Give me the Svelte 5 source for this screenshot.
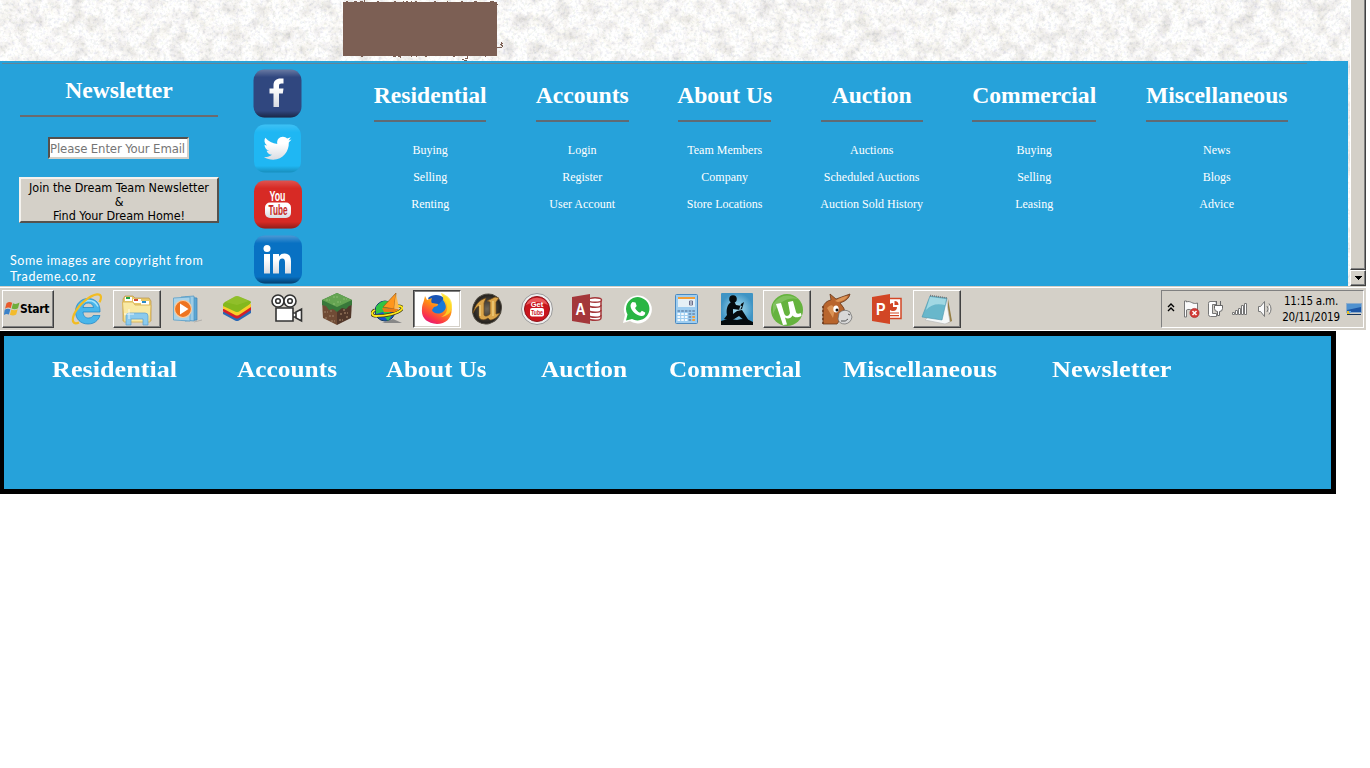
<script>
  const columns = [
    { title: 'Residential', links: ['Buying', 'Selling', 'Renting'] },
    { title: 'Accounts', links: ['Login', 'Register', 'User Account'] },
    { title: 'About Us', links: ['Team Members', 'Company', 'Store Locations'] },
    { title: 'Auction', links: ['Auctions', 'Scheduled Auctions', 'Auction Sold History'] },
    { title: 'Commercial', links: ['Buying', 'Selling', 'Leasing'] },
    { title: 'Miscellaneous', links: ['News', 'Blogs', 'Advice'] }
  ];

  // cell: width of the slot, stretch: horizontal widening of the letters
  const draft = [
    { title: 'Residential', cell: 185, stretch: 1.163 },
    { title: 'Accounts', cell: 149, stretch: 1.127 },
    { title: 'About Us', cell: 155, stretch: 1.108 },
    { title: 'Auction', cell: 128, stretch: 1.128 },
    { title: 'Commercial', cell: 174, stretch: 1.118 },
    { title: 'Miscellaneous', cell: 209, stretch: 1.141 },
    { title: 'Newsletter', cell: 150, stretch: 1.166 }
  ];

  const tasks = [
    'ie', 'explorer', 'media', 'bluestacks', 'camera', 'minecraft', 'boat', 'firefox', 'unreal',
    'gettube', 'access', 'whatsapp', 'calc', 'kindle', 'utorrent', 'emule', 'powerpoint', 'notepad'
  ];
  const raised = ['explorer', 'utorrent', 'notepad'];
  const dots = [0, 1, 2, 3, 4];
</script>

<div class="page">
  <div class="view">
    <svg class="stone" width="1350" height="286" aria-hidden="true">
      <filter id="grain" x="0" y="0" width="100%" height="100%" color-interpolation-filters="sRGB">
        <feTurbulence type="fractalNoise" baseFrequency="0.07" numOctaves="5" seed="21" result="n" />
        <feColorMatrix in="n" type="matrix" values=".24 .08 0 0 .825  .25 .08 0 0 .815  .26 .08 .03 0 .79  0 0 0 0 1" result="broad" />
        <feTurbulence type="fractalNoise" baseFrequency="0.33" numOctaves="3" seed="5" result="f" />
        <feColorMatrix in="f" type="matrix" values=".24 0 0 0 .87  .21 .03 0 0 .87  .18 0 .07 0 .863  0 0 0 0 1" result="fine" />
        <feBlend in="broad" in2="fine" mode="multiply" />
      </filter>
      <rect width="1350" height="286" fill="#f4f3f0" filter="url(#grain)" />
    </svg>
    <div class="main">
      <div class="hero">
        <svg width="162" height="61" viewBox="0 0 162 61" shape-rendering="crispEdges">
          <rect y="2" width="154" height="54" fill="#7c5f54" />
          <path d="M3 1h2v1h-2zM11 1h3v1h-3zM17 1h3v1h-3zM21 0h1v2h-1zM34 1h2v1h-2zM51 1h2v1h-2zM60 1h1v1h-1zM63 1h2v1h-2zM68 1h1v1h-1zM72 1h2v1h-2zM91 1h2v1h-2zM104 1h1v1h-1zM118 1h2v1h-2zM131 1h3v1h-3zM147 1h4v1h-4zM154 4h1v1h-1zM18 56h2v1h-2zM50 56h3v1h-3zM55 56h3v1h-3zM57 57h1v1h-1zM68 56h1v1h-1zM73 56h1v1h-1zM82 56h2v1h-2zM110 56h2v1h-2zM124 56h1v3h-1zM122 58h2v1h-2zM121 60h3v1h-3zM119 59h2v1h-2zM142 56h1v1h-1zM154 47h3v1h-3zM158 42h1v4h-1zM157 44h1v1h-1zM159 43h1v1h-1zM159 45h1v2h-1zM157 47h2v1h-2z" fill="#7c5f54" />
        </svg>
      </div>
      <footer class="footer">
        <div class="rule"></div>
        <div class="content">
          <section class="newsletter">
            <h2>Newsletter</h2>
            <input placeholder="Please Enter Your Email" />
            <button><span>Join the Dream Team Newsletter</span><br />&amp;<br /><span>Find Your Dream Home!</span></button>
            <p>Some images are copyright from<br />Trademe.co.nz</p>
          </section>
          <div class="social">
            <svg viewBox="0 0 49 49">
              <defs>
                <linearGradient id="sh" x2="0" y2="1"><stop offset="0" stop-color="#fff" stop-opacity=".28" /><stop offset=".16" stop-color="#fff" stop-opacity="0" /><stop offset=".86" stop-color="#000" stop-opacity="0" /><stop offset="1" stop-color="#000" stop-opacity=".45" /></linearGradient>
                <linearGradient id="wh" x2="0" y2="1"><stop offset=".3" stop-color="#fff" /><stop offset="1" stop-color="#d9dce2" /></linearGradient>
              </defs>
              <rect x=".5" y=".5" width="48" height="48" rx="11" fill="#30477f" /><rect x=".5" y=".5" width="48" height="48" rx="11" fill="url(#sh)" />
              <path d="M20.500 38V24.500h-4v-5h4v-3c0-5 3-7 7-7h3v5h-2c-2 0-2.500.8-2.500 2.500v2.500h4.500l-.7 5H26V38z" fill="url(#wh)" />
            </svg>
            <svg viewBox="0 0 49 49">
              <rect x="1" y=".5" width="47" height="48" rx="11" fill="#1fb7f3" /><rect x="1" y=".5" width="47" height="48" rx="11" fill="url(#sh)" opacity=".5" />
              <path d="M11 33c3 .2 5.500-.4 8-2.300-3 0-4.800-1.900-5.400-4h2.500c-2.900-.8-4.500-3-4.600-6 .8.500 1.600.7 2.500.8-2.700-2-3.200-5-1.700-7.700 3.300 3.800 7 5.800 12 6.100-.8-4.200 1.900-7.200 5.600-7.200 1.700 0 3.100.7 4.200 1.900l3.700-1.400-2.300 3.200 3-.8-2.700 2.900c.4 8.500-5.700 17.200-15.600 17.200-3.400 0-6.500-1-9.200-2.700z" fill="url(#wh)" />
            </svg>
            <svg viewBox="0 0 49 49">
              <rect x="1" y=".5" width="48" height="48" rx="11" fill="#d72a25" /><rect x="1" y=".5" width="48" height="48" rx="11" fill="url(#sh)" opacity=".7" />
              <text class="yt" x="24.500" y="21" textLength="16" lengthAdjust="spacingAndGlyphs" fill="#fff">You</text>
              <rect x="12" y="22.500" width="26" height="15.500" rx="5" fill="url(#wh)" />
              <text class="yt tube" x="25" y="35" textLength="19" lengthAdjust="spacingAndGlyphs" fill="#c52824">Tube</text>
            </svg>
            <svg viewBox="0 0 49 49">
              <rect x="1" y=".5" width="48" height="48" rx="11" fill="#0871c3" /><rect x="1" y=".5" width="48" height="48" rx="11" fill="url(#sh)" />
              <circle cx="14" cy="13.500" r="3.500" fill="#fff" />
              <path d="M11 19h6v19.500h-6zM20 19h6v2.500c1.200-2 3-3 5.500-3 4.800 0 6.500 3 6.500 8v12h-6v-11c0-2.600-.7-4-2.700-4S26 25 26 27.700v10.800h-6z" fill="url(#wh)" />
            </svg>
          </div>
          <nav class="columns">
            {#each columns as col}
              <div class="col">
                <h2>{col.title}</h2>
                <ul>
                  {#each col.links as link}<li>{link}</li>{/each}
                </ul>
              </div>
            {/each}
          </nav>
        </div>
      </footer>
    </div>
    <div class="scroll">
      <div class="thumb"></div>
      <div class="down"><svg width="7" height="4" shape-rendering="crispEdges"><path d="M0 0h7v1H6v1H5v1H4v1H3V3H2V2H1V1H0z" /></svg></div>
    </div>
  </div>

  <div class="taskbar">
    <div class="start">
      <svg width="16" height="16" viewBox="0 0 16 16">
        <path d="M2.500 2.300c2-1.700 3.800-1.500 5.700-.5L6.700 7.200C5 6.300 3.200 6.400 1 7.800z" fill="#e85a2c" />
        <path d="M9 2.300c2 1 4 .8 6.500-.7L14 7.200c-2.200 1.400-4.400 1.400-6.400.3z" fill="#6fae3c" />
        <path d="M.7 8.700c2.200-1.400 3.900-1.300 5.700-.4L4.900 13.600c-1.800-1-3.200-.9-5 .4z" fill="#3c82c8" />
        <path d="M7.300 8.500c2 1 4.200 1 6.400-.3l-1.500 5.300c-2.200 1.400-4.300 1.300-6.300.3z" fill="#f3bb2c" />
      </svg>
      <b>Start</b>
    </div>
    <div class="tasks">
      {#each tasks as t}
        <div class="task" class:raised={raised.includes(t)} class:active={t === 'firefox'}>
          <svg width="32" height="32" viewBox="0 0 32 32">
            {#if t === 'ie'}
              <path d="M29 19H12c.3 4 2.300 6 5.500 6 2.500 0 3.700-.8 4.700-2.500H29C27 28 23 31 17 31 9.500 31 4.500 26 4.500 18.500S10 5.500 17 5.500c7.500 0 12.500 5 12 13.500zM12 14.500h10.500c-.5-3-2.200-4.500-5.200-4.500s-4.700 1.700-5.300 4.500z" fill="#49b6ea" stroke="#1683c6" stroke-width=".7" />
              <path d="M7 16C9 11 12 8 18 7.500c4 0 7 2 9 6" fill="none" stroke="#a6e4fb" stroke-width="1.500" />
              <path d="M8 29.500C2 32 .5 28 3 21.500 7 12 19 2 26 1.300c5-.3 4.500 4 2.500 8" fill="none" stroke="#f2bc22" stroke-width="2.200" />
            {:else if t === 'explorer'}
              <path d="M2 5l2-3h8l2 2h14l2 3v20H2z" fill="#e8c868" stroke="#b8924a" stroke-width=".7" />
              <path d="M4 3h7v4H4z" fill="#fff" /><path d="M5 3h4v2H5z" fill="#25a343" />
              <path d="M12 5h8v4h-8z" fill="#fff" /><path d="M13 5h4v2h-4z" fill="#d54b32" />
              <path d="M20 7h8v4h-8z" fill="#fff" /><path d="M21 7h4v2h-4z" fill="#2a8cc8" />
              <path d="M1.500 8H12l2 3h16l-1 17H3z" fill="#f9e9a4" stroke="#dcb85c" />
              <path d="M5 31V22q0-3 3-3h16q3 0 3 3v9h-5v-6H10v6z" fill="#8bcaed" stroke="#5a9fcb" stroke-width=".7" />
              <path d="M8 15v10M3 20h10" stroke="#fff" opacity=".8" />
            {:else if t === 'media'}
              <path d="M14 4l12 1v22l-12 1z" fill="#5ba6d3" stroke="#3d83b4" stroke-width=".7" /><path d="M10 4l13-1v25l-13-1z" fill="#9ccce6" stroke="#4b94c3" stroke-width=".7" />
              <path d="M2.500 5L19 4v24l-16.500-1z" fill="#a9d2e8" stroke="#5a9fc9" stroke-width=".8" />
              <path d="M23 29l8-2" stroke="#999" opacity=".6" />
              <circle cx="12" cy="16" r="8.500" fill="#ee7420" stroke="#f8cda2" stroke-width="1.200" /><path d="M9 10.500l8.500 5.500L9 21.500z" fill="#fff" />
            {:else if t === 'bluestacks'}
              <path d="M2 19v2l12 6.500q2 1 4 0l12-7.500v-3L15 18z" fill="#2968b5" /><path d="M2 16v2.500L14 25q2 1 4 0l12-8v-3L15 15z" fill="#d3202b" /><path d="M2 13v2.500l12 6.500q2 1 4 0l12-8v-3L15 13z" fill="#f8cf29" />
              <path d="M2 11.500Q2 10 4 9l10-5.500q2-1 4 0L29 8q2 1 0 3l-11 7.500q-2 1-4 0L2 13z" fill="#83b81e" /><path d="M4 9l10-5.500q2-1 4 0L28 8l-12 4z" fill="#a4cb3c" opacity=".4" />
            {:else if t === 'camera'}
              <g fill="#fff" stroke="#333" stroke-width="1.600"><circle cx="7" cy="8" r="6" /><circle cx="19" cy="8" r="6" /><circle cx="7" cy="8" r="2.300" /><circle cx="19" cy="8" r="2.300" /><path d="M5 15h17v13H5zM22 20h3v4h-3zM25 19l5.500-3v12L25 25z" /></g>
            {:else if t === 'minecraft'}
              <path d="M1 8l15 7v17L2 25z" fill="#704b35" /><path d="M31 8l-15 7v17l14-7z" fill="#51372a" />
              <path d="M1 7L16 0l15 7v5l-3 1-3 3-4-1-5 4-4-3-4 1-3-4-4-1z" fill="#38783a" /><path d="M1 7L16 0l15 7-15 7z" fill="#65a452" />
              <path d="M5 7h4M12 4h5M16 9h4M22 6h4M12 11h3" stroke="#8abc70" stroke-dasharray="2 1" />
              <path d="M3 19h4M8 23h5M4 25h3M10 28h4M9 18h3M18 27h4M23 20h4M19 21h2M25 24h3M22 17h3" stroke="#8f7057" stroke-width="1.500" stroke-dasharray="2 1" />
            {:else if t === 'boat'}
              <path d="M11 30h20l-9-4z" fill="#888" /><circle cx="14" cy="18" r="10" fill="#1753cc" stroke="#123a66" />
              <path d="M5 14c4-6 9-7 14-5l-4 5 5 4-5 6-3-5-7 2zM14 24l7-2-4 6z" fill="#32c443" />
              <path d="M4 17c-4 2-4 6 1 6 9 0 22-2 26-7 1-2-1-3-4-3" fill="none" stroke="#3d3b10" stroke-width="3.200" /><path d="M4 17c-4 2-4 6 1 6 9 0 22-2 26-7 1-2-1-3-4-3" fill="none" stroke="#ffe71c" stroke-width="1.900" />
              <path d="M25 0L12 14l11 2z" fill="#ff961d" stroke="#9b5c12" stroke-width=".7" /><path d="M25 1l3 14-5 1z" fill="#ffb74d" /><path d="M11 15l17 1-4 3H13z" fill="#ec7b12" />
            {:else if t === 'firefox'}
              <defs><linearGradient id="ff" x1=".8" x2=".25" y2="1"><stop stop-color="#ffea2a" /><stop offset=".45" stop-color="#ff8a16" /><stop offset=".8" stop-color="#fb3549" /><stop offset="1" stop-color="#e3167c" /></linearGradient></defs>
              <circle cx="16" cy="15" r="11" fill="#1679d8" /><path d="M7 5c4-4 12-4 16 0l-5 6-8 0z" fill="#1a55b5" />
              <path d="M4 3l2 4 5-2c-1 2-1 4 0 5l6 1c0 2-1 2-4 3l-2 3c1 4 8 5 12 1 3-3 2-7-1-11 1-2 0-4-1-5 6 1 8 5 9 9 3 12-4 20-14 20C6 30 0 25 1 16c0-5 2-7 3-13z" fill="url(#ff)" />
              <path d="M20 0c1 5 5 7 6 12 1 7-2 10-6 12 8-1 11-6 11-12S26 2 20 0z" fill="#ffe02a" opacity=".75" />
            {:else if t === 'unreal'}
              <defs><radialGradient id="un"><stop stop-color="#6f6657" /><stop offset="1" stop-color="#211e1b" /></radialGradient></defs>
              <ellipse cx="16" cy="16" rx="14" ry="15.500" fill="url(#un)" stroke="#514c43" transform="rotate(35 16 16)" />
              <path d="M2 20C4 12 8 7 15 5l-2 5v12c1 2 4 1 6-1V9l-3-1 8-4 4 1-3 4v12l4-1c-3 5-7 7-10 7l-2-2c-4 3-9 2-9-2V13c-3 1-4 4-6 7z" fill="#dba54a" stroke="#6e4a1c" stroke-width=".7" />
              <path d="M9 12v11M22 8v15" stroke="#f8df93" />
            {:else if t === 'gettube'}
              <circle cx="16" cy="16" r="15.500" fill="#eee" stroke="#999" /><circle cx="16" cy="16" r="12.500" fill="#c9151d" stroke="#8e1218" /><path d="M5 12a12 12 0 0122 0Q16 6 5 12z" fill="#e8575a" />
              <text class="mini" x="16" y="14" font-size="7.500">Get</text><rect x="9" y="15" width="14" height="8.500" rx="2" fill="#fff" /><text class="mini dark" x="16" y="21.700" font-size="7" textLength="12" lengthAdjust="spacingAndGlyphs">Tube</text>
            {:else if t === 'access'}
              <g fill="#fff" stroke="#a4373a" stroke-width="1.500"><path d="M17 7v18c2 3 13 3 13 0V7z" /><path d="M17 12c2 3 13 3 13 0M17 17c2 3 13 3 13 0M17 22c2 3 13 3 13 0" fill="none" /><ellipse cx="24" cy="7" rx="6.500" ry="2.300" /></g>
              <path d="M1 4l18-3v30L1 28z" fill="#a4373a" /><text class="office" x="9.500" y="22" textLength="10" lengthAdjust="spacingAndGlyphs">A</text>
            {:else if t === 'whatsapp'}
              <path d="M2 30l2-8a14 14 0 115 6z" fill="#fff" /><path d="M5 27.500l1.500-6A11.700 11.700 0 1111 26z" fill="#29b543" />
              <path d="M11.500 9l3 .5 1.200 3.500-1.600 2c1 2.200 2.600 3.800 5 4.800l1.800-2 3.300 1.700c.3 2-1.600 4-4.200 3.500-5.200-.8-10-5.400-10.500-10 0-1.800 1-3.300 2-4z" fill="#fff" />
            {:else if t === 'calc'}
              <rect x="4.500" y="1.500" width="22" height="29" rx="1" fill="#9ecdf0" stroke="#4a89c0" /><path d="M7 4h17v2H7z" fill="#f39d35" /><path d="M7 6h17v8H7z" fill="#e5f0f6" />
              <path d="M18.500 8h3v4h-3zM18.500 10h3" fill="none" stroke="#557" stroke-width=".8" />
              {#each dots as x}{#each [0, 1, 2, 3] as y}<rect x={6.5 + x * 3.7} y={17 + y * 3} width="2.600" height="2" fill={x === 4 && y > 1 ? '#f39d35' : x < 3 && y > 0 ? '#f3f9fd' : '#7398bd'} />{/each}{/each}
            {:else if t === 'kindle'}
              <defs><radialGradient id="ki"><stop stop-color="#b0e4f3" /><stop offset="1" stop-color="#3f94c4" /></radialGradient></defs>
              <rect width="32" height="32" rx="1" fill="url(#ki)" /><path d="M0 32v-4q7-3 16-1 9-3 16 2v3z" fill="#050b0e" />
              <circle cx="12" cy="6" r="3.800" fill="#050b0e" /><path d="M10 9c-4 3-5 8-4 13l-3 4 7 2 8-5 6 5h4l-7-11-5 1-4 3v-5l7 1 2-4-6-1-2-4zM20 11l3-2-2 7-3 1z" fill="#050b0e" />
            {:else if t === 'utorrent'}
              <circle cx="16" cy="16" r="16" fill="#65b33e" /><path d="M2 10Q12-4 27 5 10 2 2 20z" fill="#9bcf7e" opacity=".5" />
              <path d="M5 10l5-1 3 10c1 4 5 4 6 0L17 8l5-1 3 11c.6 2 2 2 5 1l.5 3c-4 2-7.500 1.500-9-.5-1.500 3-5 4-7.500 2l2 7-4 .5z" fill="#fff" />
            {:else if t === 'emule'}
              <path d="M2 31V14q2-6 8-7l-1-6 6 5 14-5q-1 6-10 9 5 5 5 10l-8 11z" fill="#b8652d" stroke="#693719" stroke-width=".8" />
              <path d="M2 13v18" stroke="#6b3a1c" stroke-width="1.500" stroke-dasharray="2 2" /><path d="M14 8q8-5 13-5-3 5-10 6zM6 15q5-6 8 1l-2 9z" fill="#dc9456" />
              <path d="M18 20q5-5 11-1l2 5q-1 6-7 7-6 0-7-5z" fill="#d8d8d8" stroke="#666" stroke-width=".7" /><ellipse cx="15" cy="16" rx="2.700" ry="3.500" fill="#fff" /><circle cx="16" cy="17" r="1.500" fill="#111" /><path d="M27 21l2 1M20 28q5 1 7-2" stroke="#555" fill="none" />
            {:else if t === 'powerpoint'}
              <path d="M17 5.500h13v20H17z" fill="#fff" stroke="#d24625" stroke-width="1.500" /><path d="M22 10a4 4 0 104 4h-4z" fill="#d24625" /><path d="M23.500 8q4 0 4 4h-4z" fill="#d24625" /><path d="M19 20h9M19 22.700h9" stroke="#d24625" stroke-width="1.200" />
              <path d="M1 4l18-3v30L1 28z" fill="#d24625" /><text class="office" x="9.700" y="22" textLength="9.500" lengthAdjust="spacingAndGlyphs">P</text>
            {:else if t === 'notepad'}
              <path d="M27 5l4 22-4 2z" fill="#957d43" /><path d="M25 4l4 24-5 2-20-4z" fill="#f5f8f8" stroke="#bbb" stroke-width=".7" />
              <path d="M9 2l17 2-5 22-20-3z" fill="#68b7cb" stroke="#4996ac" stroke-width=".6" /><path d="M9 3l16 2-1 6Q12 8 5 16z" fill="#b4e3eb" opacity=".75" />
              <path d="M9 1.500l17 2.500" stroke="#777" stroke-width="1.600" stroke-dasharray="1 1" />
            {/if}
          </svg>
        </div>
      {/each}
    </div>
    <div class="tray">
      <svg class="icons" width="112" height="32" viewBox="0 0 112 32">
        <path d="M4 14l3-3 3 3M4 18l3-3 3 3" fill="none" stroke="#000" stroke-width="1.400" />
        <path d="M20.500 8v16h2v-7c4-2 5 2 11 0v-7c-5 2-7-3-11-1V8z" fill="#fafafa" stroke="#777" />
        <circle cx="30.500" cy="20" r="4.600" fill="#d33b36" stroke="#a42121" stroke-width=".6" /><path d="M28.500 18l4 4m0-4l-4 4" stroke="#fff" stroke-width="1.500" />
        <path d="M52 8.500h-6q-1.500 0-1.500 2v11q0 2 2 2h6v-3h-4v-9h4z" fill="#fff" stroke="#777" />
        <path d="M50.500 12.500h8v3q0 3-3 3v4h-2v-4q-3 0-3-3zM52.500 8v4M56.500 8v4" fill="#fff" stroke="#666" />
        <g fill="#fff" stroke="#777"><path d="M68.500 19.500h2v2h-2zM71.500 17.500h2v4h-2zM74.500 15.500h2v6h-2zM77.500 12.500h2v9h-2zM80.500 10.500h2v11h-2z" /></g>
        <path d="M94.500 13.500h2l4-5v15l-4-5h-2zM103 13q2 3 0 6M105 10.500q4 5.500 0 11" fill="#fafafa" stroke="#777" />
      </svg>
      <div class="clock"><span>11:15 a.m.</span><span>20/11/2019</span></div>
      <svg width="16" height="14" viewBox="0 0 16 14"><path d="M.5 1.500h15v9H.5z" fill="#1d56a5" stroke="#8daccb" /><path d="M1 2h14v3L1 8z" fill="#4f91cf" /><path d="M1 12h14v1H1z" fill="#16365f" /><path d="M1 9h3v3H1z" fill="#e8c02b" /><path d="M3 9h2v2H3z" fill="#66a8e4" /></svg>
    </div>
  </div>

  <div class="draft">
    {#each draft as d}
      <h2 style="width: {d.cell}px"><span style="transform: scaleX({d.stretch})">{d.title}</span></h2>
    {/each}
  </div>
</div>

<style>
  :global(body) { background: #fff; overflow: hidden; }
  .page { width: 1366px; height: 768px; overflow: hidden; }
  h2, p, ul { margin: 0; padding: 0; font-weight: bold; }
  .view { position: relative; display: flex; height: 286px; }
  .stone { position: absolute; left: 0; top: 0; }
  .main { position: relative; width: 1350px; }
  .hero { height: 61px; padding-left: 343px; }
  .hero svg { display: block; }
  .footer { width: 1348px; height: 225px; background: #26a2da; box-sizing: border-box; padding-top: 2px; color: #fff; font-family: "Liberation Serif", serif; }
  .rule { height: 1px; width: 1305px; margin-left: 2px; background: #638598; }
  .content { display: flex; height: 222px; }
  .newsletter { width: 238px; display: flex; flex-direction: column; align-items: center; }
  h2 { font-size: 23.6px; line-height: 28px; white-space: nowrap; text-align: center; }
  .newsletter h2 { width: 198px; margin-top: 12px; height: 39px; border-bottom: 2px solid #6c6a6e; }
  input { box-sizing: border-box; width: 141px; height: 22px; margin: 20px 1px 18px 0; padding: 0; border: 2px solid; border-color: #55504c #d4d0c8 #d4d0c8 #55504c; background: #fff; border-radius: 0; font: 13px "DejaVu Sans Condensed", "DejaVu Sans", sans-serif; letter-spacing: -.12px; }
  input::placeholder { color: #757575; opacity: 1; }
  button { box-sizing: border-box; width: 200px; height: 46px; padding: 2px 0 0; border: 2px solid; border-color: #f4f2ee #55524e #55524e #f4f2ee; border-radius: 0; background: #d4d0c8; color: #000; font: 12.500px/14px "DejaVu Sans Condensed", "DejaVu Sans", sans-serif; white-space: nowrap; letter-spacing: -.05px; }
  .newsletter p { align-self: flex-start; margin: 30px 0 0 10px; font: 12.500px/16px Lato, sans-serif; letter-spacing: .57px; white-space: nowrap; }
  .social { width: 50px; margin-left: 15px; padding-top: 5px; display: flex; flex-direction: column; gap: 6.300px; }
  .social svg { display: block; width: 49px; height: 49px; flex: none; }
  .yt { font: bold 15px "Liberation Sans", sans-serif; text-anchor: middle; }
  .tube { font-size: 14.500px; }
  .columns { display: grid; grid-template-columns: 112px 93px 93px 102px 124px 142px; gap: 49.500px; margin-left: 71.200px; padding-top: 17px; }
  .col h2 { height: 39px; border-bottom: 2px solid #606a73; display: flex; justify-content: center; }
  ul { list-style: none; margin-top: 15px; text-align: center; }
  li { font-size: 12px; line-height: 26.800px; font-weight: normal; white-space: nowrap; display: flex; justify-content: center; }
  .scroll { position: relative; width: 16px; display: flex; flex-direction: column; background: #d4d0c8; }
  .thumb, .down { box-sizing: border-box; border: 1px solid; border-color: #fff #404040 #404040 #fff; box-shadow: inset -1px -1px #808080; background: #d4d0c8; }
  .thumb { height: 270px; border-top: 0; }
  .down { height: 16px; display: flex; align-items: center; justify-content: center; }
  .taskbar { box-sizing: border-box; height: 45px; display: flex; align-items: center; background: #d4d0c8; box-shadow: inset 0 1px #d4d0c8, inset 0 2px #fff, inset 0 -1px #fff; padding: 1px 2px 0; font-family: "DejaVu Sans Condensed", "DejaVu Sans", sans-serif; }
  .start { box-sizing: border-box; width: 52px; height: 38px; display: flex; align-items: center; border: 1px solid; border-color: #fff #404040 #404040 #fff; box-shadow: inset -1px -1px #808080; padding-left: 1px; gap: 0; }
  .start b { font-size: 12px; letter-spacing: -.3px; }
  .tasks { display: flex; gap: 2px; margin-left: 9px; }
  .task { box-sizing: border-box; width: 48px; height: 38px; padding: 3px 8px 0; }
  .task svg { display: block; }
  .raised, .active { padding: 3px 7px 0; border: 1px solid; border-color: #fff #404040 #404040 #fff; box-shadow: inset -1px -1px #808080; }
  .active { padding-top: 2px; background: #fff; border-color: #404040 #fff #fff #404040; box-shadow: inset 1px 1px #808080, inset -1px -1px #d4d0c8; }
  .mini { font-family: "Liberation Sans", sans-serif; font-weight: bold; text-anchor: middle; fill: #fff; }
  .dark { fill: #c9151d; }
  .office { font: bold 17px "Liberation Sans", sans-serif; fill: #fff; text-anchor: middle; }
  .tray { box-sizing: border-box; width: 203px; height: 38px; margin-left: auto; border: 1px solid; border-color: #808080 #fff #fff #808080; display: flex; align-items: center; padding-left: 2px; }
  .icons { flex: none; }
  .clock { width: 70px; flex: none; display: flex; flex-direction: column; align-items: center; font-size: 11.500px; line-height: 16px; letter-spacing: -.2px; white-space: nowrap; }
  .draft { box-sizing: border-box; width: 1336px; height: 163px; border: 5px solid #000; border-left-width: 4px; background: #26a2da; display: flex; padding: 20px 0 0 48px; }
  .draft h2 { flex: none; font: bold 22.500px/28px "Liberation Serif", serif; color: #fff; text-align: left; }
  .draft span { display: inline-block; transform-origin: left; }
</style>
